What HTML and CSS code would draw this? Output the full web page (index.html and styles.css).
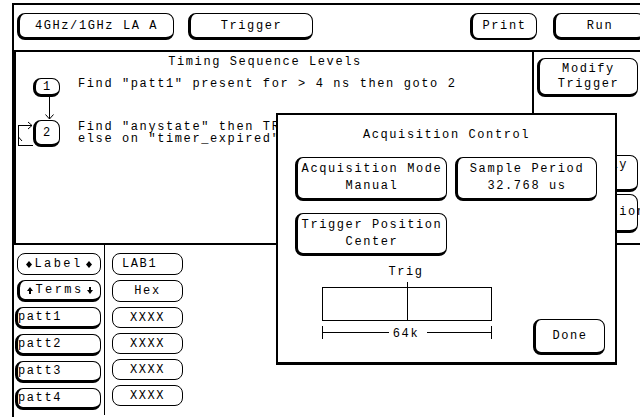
FILE: index.html
```html
<!DOCTYPE html>
<html lang="en">
<head>
    <link rel="stylesheet" href="styles.css">
    <meta charset="UTF-8">
    <meta name="viewport" content="width=device-width, initial-scale=1.0">
    <title>Timing Sequence Levels</title>
</head>
<body>
    <div class="screen">
        <header class="top-bar">
            <div class="btn btn-top analyzer-btn"><span>4GHz/1GHz LA A</span></div>
            <div class="btn btn-top menu-btn"><span>Trigger</span></div>
            <div class="btn btn-top print-btn"><span>Print</span></div>
            <div class="btn btn-top run-btn"><span>Run</span></div>
        </header>

        <section class="main-area">
            <div class="sequence-panel">
                <h2 class="panel-title">Timing Sequence Levels</h2>
                <div class="sequence">
                    <div class="node-cell">
                        <div class="btn level-box level-one"><span>1</span></div>
                    </div>
                    <div class="level-text">Find "patt1" present for &gt; 4 ns then goto 2</div>

                    <div class="node-cell">
                        <svg class="connector" width="62" height="23" viewBox="0 0 62 23">
                            <line x1="33.5" y1="0" x2="33.5" y2="22" stroke="#000" shape-rendering="crispEdges"/>
                            <polyline points="29.5,17.5 33.5,22 37.5,17.5" fill="none" stroke="#000"/>
                        </svg>
                    </div>
                    <div></div>

                    <div class="node-cell node-loop">
                        <svg class="loop" width="17" height="27" viewBox="0 0 17 27">
                            <polyline points="16,5.5 2.5,5.5 2.5,25.5 17,25.5" fill="none" stroke="#000" shape-rendering="crispEdges"/>
                            <polyline points="12,2 16,5.5 12,9" fill="none" stroke="#000"/>
                            <line x1="2.5" y1="17" x2="6" y2="21" stroke="#000"/>
                        </svg>
                        <div class="btn level-box level-two"><span>2</span></div>
                    </div>
                    <div class="level-text level-text-two">
                        <div>Find "anystate" then TRIGGER and fill memory</div>
                        <div>else on "timer_expired" goto 1</div>
                    </div>
                </div>
            </div>

            <aside class="side-menu">
                <div class="btn side-btn modify-btn"><span>Modify</span><span>Trigger</span></div>
                <div class="btn side-btn delay-btn"><span>Arm Delay</span><span>Off</span></div>
                <div class="btn side-btn config-btn"><span>Configuration</span></div>
            </aside>
        </section>

        <section class="lower-area">
            <div class="label-col">
                <div class="btn btn-thin field label-btn">
                    <span class="icon-text">
                        <svg width="6" height="7" viewBox="0 0 6 7"><polygon points="3,0 6,3.5 3,7 0,3.5" fill="#000"/></svg>
                        <span class="wide">Label</span>
                        <svg width="6" height="7" viewBox="0 0 6 7"><polygon points="3,0 6,3.5 3,7 0,3.5" fill="#000"/></svg>
                    </span>
                </div>
                <div class="btn field label-btn">
                    <span class="icon-text">
                        <svg width="6" height="7" viewBox="0 0 6 7"><polygon points="3,0 6,4 0,4" fill="#000"/><rect x="2" y="4" width="2" height="3" fill="#000"/></svg>
                        <span class="wide">Terms</span>
                        <svg width="6" height="7" viewBox="0 0 6 7"><rect x="2" y="0" width="2" height="3" fill="#000"/><polygon points="0,3 6,3 3,7" fill="#000"/></svg>
                    </span>
                </div>
                <div class="btn field patt-btn"><span>patt1</span></div>
                <div class="btn field patt-btn"><span>patt2</span></div>
                <div class="btn field patt-btn"><span>patt3</span></div>
                <div class="btn field patt-btn"><span>patt4</span></div>
            </div>
            <div class="value-col">
                <div class="btn btn-thin field value-box lab-box"><span>LAB1</span></div>
                <div class="btn btn-thin field value-box"><span>Hex</span></div>
                <div class="btn btn-thin field value-box xxxx"><span>XXXX</span></div>
                <div class="btn btn-thin field value-box xxxx"><span>XXXX</span></div>
                <div class="btn btn-thin field value-box xxxx"><span>XXXX</span></div>
                <div class="btn btn-thin field value-box xxxx"><span>XXXX</span></div>
            </div>
        </section>
    </div>

    <!-- Acquisition Control pop-up, drawn over the trigger screen -->
    <div class="popup">
        <h3 class="popup-title">Acquisition Control</h3>
        <div class="popup-grid">
            <div class="btn popup-btn"><span>Acquisition Mode</span><span>Manual</span></div>
            <div class="btn popup-btn"><span>Sample Period</span><span>32.768 us</span></div>
            <div class="btn popup-btn"><span>Trigger Position</span><span>Center</span></div>
        </div>
        <div class="popup-bottom">
            <svg class="trig-diagram" width="176" height="80" viewBox="0 0 176 80">
                <text x="86" y="13" text-anchor="middle">Trig</text>
                <g stroke="#000" fill="none" shape-rendering="crispEdges">
                    <rect x="2.5" y="25.5" width="169" height="33"/>
                    <line x1="87.5" y1="20" x2="87.5" y2="58.5"/>
                    <line x1="2.5" y1="70.5" x2="69" y2="70.5"/>
                    <line x1="107" y1="70.5" x2="171.5" y2="70.5"/>
                    <line x1="2.5" y1="64" x2="2.5" y2="77"/>
                    <line x1="171.5" y1="64" x2="171.5" y2="77"/>
                </g>
                <text x="86" y="75" text-anchor="middle">64k</text>
            </svg>
            <div class="btn done-btn"><span>Done</span></div>
        </div>
    </div>
</body>
</html>
```

FILE: styles.css
```css
* {
    box-sizing: border-box;
}

body {
    margin: 0;
    width: 640px;
    height: 417px;
    overflow: hidden;
    position: relative;
    background-color: #ffffff;
    color: #000000;
    font-family: "Liberation Mono", "DejaVu Sans Mono", monospace;
    font-size: 12px;
    letter-spacing: 1.6px;
}

h2, h3 {
    margin: 0;
    font-size: inherit;
    font-weight: normal;
}

.screen {
    margin: 3px 0 0 12px;
    height: 414px;
    border-top: 2px solid #000;
    border-left: 2px solid #000;
}

/* HP style button: thin outline, heavy left and bottom edge */
.btn {
    flex: none;
    display: flex;
    flex-direction: column;
    align-items: center;
    justify-content: center;
    border: 1px solid #000;
    border-left-width: 3px;
    border-bottom-width: 3px;
    border-radius: 8px;
    background-color: #ffffff;
    line-height: 14px;
    white-space: nowrap;
}

.btn-thin {
    border-width: 1px;
}

/* Top bar */
.top-bar {
    display: flex;
    align-items: flex-start;
    height: 47px;
    padding-top: 8px;
    border-bottom: 2px solid #000;
}

.btn-top {
    height: 27px;
}

.analyzer-btn {
    width: 157px;
    margin-left: 3px;
}

.menu-btn {
    width: 125px;
    margin-left: 14px;
}

.print-btn {
    width: 67px;
    margin-left: 157px;
    border-bottom-width: 2px;
}

.run-btn {
    width: 92px;
    margin-left: 16px;
}

/* Sequence levels */
.main-area {
    display: grid;
    grid-template-columns: 520px 1fr;
    height: 193px;
    border-bottom: 2px solid #000;
}

.sequence-panel {
    border-left: 2px solid #000;
    border-right: 2px solid #000;
}

.panel-title {
    text-align: center;
    line-height: 14px;
    padding: 3px 18px 0 0;
}

.sequence {
    display: grid;
    grid-template-columns: 62px 1fr;
    margin-top: 9px;
}

.node-loop {
    display: flex;
}

.connector, .loop {
    display: block;
}

.level-box {
    width: 27px;
    height: 19px;
    margin-left: 17px;
}

.level-two {
    height: 27px;
    margin-left: 0;
}

.level-text {
    white-space: nowrap;
    line-height: 14px;
    margin-top: -1px;
}

.level-text-two {
    line-height: 12px;
    margin-top: 0;
    padding-top: 1px;
}

/* Right hand menu */
.side-menu {
    display: flex;
    flex-direction: column;
    padding: 6px 0 0 3px;
}

.side-btn {
    width: 101px;
    line-height: 15px;
}

.modify-btn {
    height: 39px;
}

.delay-btn {
    height: 37px;
    margin-top: 58px;
}

.config-btn {
    height: 39px;
    margin-top: 2px;
}

/* Label / term list */
.lower-area {
    display: flex;
    height: 170px;
}

.label-col {
    width: 91px;
    border-right: 1px solid #000;
    padding: 8px 0 0 1px;
    display: flex;
    flex-direction: column;
    gap: 5px;
}

.value-col {
    display: flex;
    flex-direction: column;
    gap: 5px;
    padding: 8px 0 0 7px;
}

.field {
    height: 22px;
}

.label-btn {
    width: 84px;
    margin-left: 2px;
}

.icon-text {
    display: flex;
    align-items: center;
    gap: 2px;
}

.wide {
    letter-spacing: 2.4px;
    margin-right: 1px;
}

.patt-btn {
    width: 86px;
    align-items: flex-start;
}

.value-box {
    width: 71px;
}

.lab-box {
    align-items: flex-start;
    padding-left: 9px;
}

.xxxx {
    height: 21px;
}

/* Acquisition Control pop-up */
.popup {
    position: absolute;
    left: 276px;
    top: 113px;
    width: 341px;
    height: 252px;
    border: 2px solid #000;
    border-bottom-width: 3px;
    background-color: #ffffff;
    padding: 13px 0 0 17px;
}

.popup-title {
    margin-left: -17px;
    text-align: center;
    line-height: 14px;
}

.popup-grid {
    display: grid;
    grid-template-columns: 152px 142px;
    grid-template-rows: 44px 43px;
    column-gap: 8px;
    row-gap: 12px;
    margin-top: 15px;
}

.popup-btn {
    line-height: 17px;
}

.popup-bottom {
    display: flex;
    align-items: flex-start;
    margin-top: 6px;
}

.trig-diagram {
    display: block;
    margin-left: 25px;
}

.done-btn {
    width: 72px;
    height: 36px;
    margin-left: 37px;
    margin-top: 57px;
}
```
